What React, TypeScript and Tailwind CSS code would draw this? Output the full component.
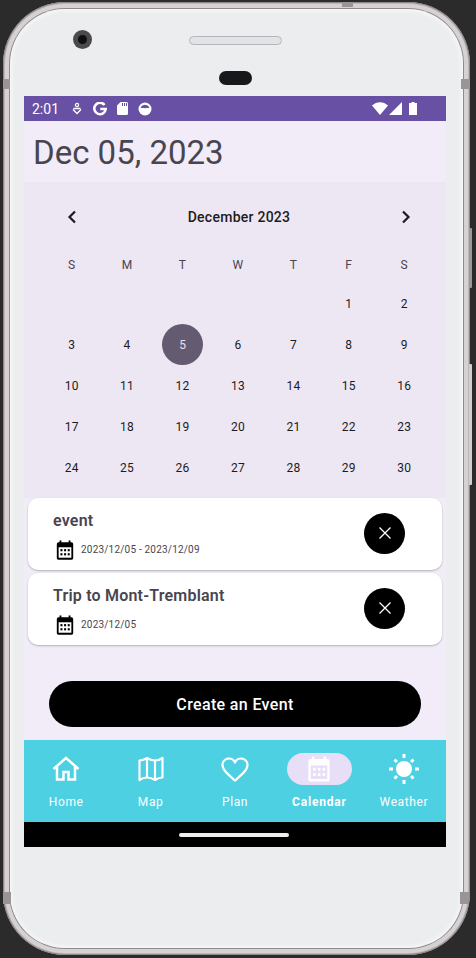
const F = "[font-family:Roboto,'Liberation_Sans',sans-serif]";

const weeks: (number | null)[][] = [
  [null, null, null, null, null, 1, 2],
  [3, 4, 5, 6, 7, 8, 9],
  [10, 11, 12, 13, 14, 15, 16],
  [17, 18, 19, 20, 21, 22, 23],
  [24, 25, 26, 27, 28, 29, 30],
];

function CalIcon({ size = 20, color = "#000", hole = "#fff" }: { size?: number; color?: string; hole?: string }) {
  return (
    <svg width={size} height={size} viewBox="0 0 20 22" fill="none">
      <rect x="4" y="0.5" width="2" height="4" fill={color} />
      <rect x="14" y="0.5" width="2" height="4" fill={color} />
      <path d="M3 2.5h14a2 2 0 0 1 2 2V20a1.6 1.6 0 0 1-1.6 1.6H2.6A1.6 1.6 0 0 1 1 20V4.500a2 2 0 0 1 2-2z" fill={color} />
      <rect x="3" y="8" width="14" height="11.500" fill={hole} />
      {[5, 9, 13].map((x) => (
        <g key={x}>
          <rect x={x} y="10" width="2.200" height="2.400" fill={color} />
          <rect x={x} y="14.500" width="2.200" height="2.400" fill={color} />
        </g>
      ))}
    </svg>
  );
}

function CloseBtn() {
  return (
    <div className="w-[41px] h-[41px] mt-[-2px] rounded-full bg-black flex items-center justify-center">
      <svg width="12" height="12" viewBox="0 0 12 12" stroke="#fff" strokeWidth="1.300">
        <path d="M0.500 0.500l11 11M11.500 0.500l-11 11" />
      </svg>
    </div>
  );
}

function EventCard({ title, date, top }: { title: string; date: string; top: string }) {
  return (
    <div className={`${top} h-[72px] mx-[4px] bg-white rounded-[10px] shadow-[0_1px_2px_rgba(0,0,0,0.25)] flex items-center pl-[25px] pr-[37px]`}>
      <div className="flex-1 flex flex-col">
        <div className="text-[16px] leading-[20px] font-semibold tracking-[0.2px] text-[#49454f] mt-[2px]">{title}</div>
        <div className="flex items-center gap-[6px] mt-[9px] ml-[2px]">
          <CalIcon size={20} />
          <span className="text-[10px] leading-[14px] tracking-[0.2px] text-[#49454f]">{date}</span>
        </div>
      </div>
      <CloseBtn />
    </div>
  );
}

function NavItem({ label, icon, active }: { label: string; icon: React.ReactNode; active?: boolean }) {
  return (
    <div className="flex-1 flex flex-col items-center">
      <div className={`w-[65px] h-[32px] rounded-full flex items-center justify-center ${active ? "bg-[#e8def8]" : ""}`}>{icon}</div>
      <div className={`mt-[9px] text-[12px] leading-[16px] text-white ${active ? "font-bold tracking-[0.8px]" : "font-normal tracking-[0.6px]"}`}>{label}</div>
    </div>
  );
}

export default function App() {
  return (
    <div className={`${F} w-[476px] h-[958px] bg-[#2b2b2b] overflow-hidden pt-[2px] pl-[3px] relative`}>
      {/* side buttons */}
      <div className="absolute left-[469px] top-[228px] w-[3px] h-[60px] bg-[#9a9a9a] rounded-r-[1px]" />
      <div className="absolute left-[469px] top-[364px] w-[3px] h-[121px] bg-[#cfcfcf] rounded-r-[1px]" />
      {/* phone body */}
      <div className="w-[467px] h-[953px] rounded-[62px] bg-[#bdb6b8] p-[2px] shadow-[inset_0_0_0_1px_#8f898b]">
        <div className="w-full h-full rounded-[60px] bg-[#d6d1d3] p-[4px]">
          <div className="w-full h-full rounded-[56px] p-[1px] bg-[#8e8a8c]">
            <div className="w-full h-full rounded-[55px] bg-[#ecedef] shadow-[inset_0_0_6px_#ffffff] flex flex-col pl-[14px]">
              {/* top bezel */}
              <div className="h-[87px] relative shrink-0">
                <div className="absolute left-[49px] top-[21px] w-[19px] h-[19px] rounded-full bg-[#4a4a4d] flex items-center justify-center">
                  <div className="w-[9px] h-[9px] rounded-full bg-[#0f0f0f]" />
                </div>
                <div className="absolute left-[165px] top-[27px] w-[93px] h-[9px] rounded-full bg-[#e2e3e6] border border-[#b5b6ba]" />
                <div className="absolute left-[195px] top-[62px] w-[33px] h-[14px] rounded-full bg-[#16181b]" />
              </div>
              {/* screen */}
              <div className="w-[422px] h-[751px] flex flex-col shrink-0 overflow-hidden bg-[#f1ecf7]">
                {/* status bar */}
                <div className="h-[25px] bg-[#6850a4] flex items-center pl-[8px] text-white shrink-0">
                  <span className="text-[14px] leading-[20px] w-[38px] font-normal">2:01</span>
                  <svg className="ml-[2px]" width="10" height="13" viewBox="0 0 10 13" fill="none" stroke="#fff" strokeWidth="1.300">
                    <circle cx="5" cy="3" r="1.600" />
                    <path d="M1.500 6.500h7M1 7.500L5 11.500l4-4" />
                  </svg>
                  <svg className="ml-[11px]" width="14" height="14" viewBox="0 0 14 14" fill="none" stroke="#fff" strokeWidth="2.600">
                    <path d="M11.500 3A5.700 5.700 0 1 0 12.700 7H7.300" />
                  </svg>
                  <svg className="ml-[10px]" width="11" height="13" viewBox="0 0 11 13" fill="#fff">
                    <path d="M3.500 0H9.500A1.500 1.500 0 0 1 11 1.500V11.500A1.500 1.500 0 0 1 9.500 13H1.500A1.500 1.500 0 0 1 0 11.500V3.500zM5 1v3h1V1zM7 1v3h1V1zM9 1v3h1V1z" fillRule="evenodd" />
                  </svg>
                  <svg className="ml-[10px]" width="14" height="14" viewBox="0 0 14 14">
                    <circle cx="7" cy="7" r="6.500" fill="#fff" />
                    <path d="M2.500 5.500A5 5 0 0 1 11.500 5.500C10 6.500 9 5.500 7 6.300 5 5.500 4 6.500 2.500 5.500z" fill="#6850a4" />
                  </svg>
                  <div className="ml-auto flex items-center pr-[29px]">
                    <svg width="16" height="13" viewBox="0 0 16 13" fill="#fff">
                      <path d="M0 3.500C4.500-1 11.500-1 16 3.500L8 13z" />
                    </svg>
                    <svg className="ml-[1px]" width="13" height="13" viewBox="0 0 13 13" fill="#fff">
                      <path d="M13 0V13H0z" />
                    </svg>
                    <svg className="ml-[7px]" width="8" height="13" viewBox="0 0 8 13" fill="#fff">
                      <path d="M2.500 0H5.500V1H8V13H0V1H2.500z" />
                    </svg>
                  </div>
                </div>
                {/* title */}
                <div className="h-[61px] bg-[#f2ecf9] flex items-center pl-[9px] shrink-0">
                  <span className="text-[33px] leading-[40px] text-[#49454f] mt-[2px] mr-[1px]">Dec 05, 2023</span>
                </div>
                {/* calendar */}
                <div className="h-[316px] bg-[#ede7f4] shrink-0">
                  <div className="h-[70px] flex items-center justify-between pl-[43px] pr-[35px]">
                    <svg width="10" height="14" viewBox="0 0 10 14" fill="none" stroke="#1d1b20" strokeWidth="2.200">
                      <path d="M8 1.500L2.500 7 8 12.500" />
                    </svg>
                    <span className="text-[14px] leading-[20px] font-medium text-[#1d1b20] tracking-[0.25px]">December 2023</span>
                    <svg width="10" height="14" viewBox="0 0 10 14" fill="none" stroke="#1d1b20" strokeWidth="2.200">
                      <path d="M2 1.500L7.500 7 2 12.500" />
                    </svg>
                  </div>
                  <div className="grid grid-cols-7 w-[388px] ml-[20px] h-[25px] items-center">
                    {["S", "M", "T", "W", "T", "F", "S"].map((d, i) => (
                      <div key={i} className="text-center text-[12px] leading-[16px] tracking-[0.4px] text-[#49454f]">{d}</div>
                    ))}
                  </div>
                  <div className="w-[388px] ml-[20px] mt-[6px] flex flex-col">
                    {weeks.map((w, i) => (
                      <div key={i} className="grid grid-cols-7 h-[41px]">
                        {w.map((d, j) => (
                          <div key={j} className="flex items-center justify-center">
                            {d === 5 ? (
                              <div className="w-[41px] h-[41px] rounded-full bg-[#655b70] flex items-center justify-center text-[12px] text-[#e8e0ee]">5</div>
                            ) : (
                              <span className="text-[12px] leading-[16px] tracking-[0.3px] text-[#1d1b20]">{d}</span>
                            )}
                          </div>
                        ))}
                      </div>
                    ))}
                  </div>
                </div>
                {/* events */}
                <div className="flex-1 flex flex-col">
                  <EventCard top="" title="event" date="2023/12/05 - 2023/12/09" />
                  <EventCard top="mt-[3px]" title="Trip to Mont-Tremblant" date="2023/12/05" />
                  <div className="mt-[36px] mx-[25px] h-[46px] rounded-full bg-black flex items-center justify-center pt-[2px] text-[16px] font-medium tracking-[0.35px] text-white">Create an Event</div>
                </div>
                {/* nav */}
                <div className="h-[82px] bg-[#4dd0e2] flex pt-[13px] shrink-0">
                  <NavItem label="Home" icon={
                    <svg width="28" height="26" viewBox="0 0 28 26" fill="none" stroke="#fff" strokeWidth="2.500">
                      <path d="M1.500 13L14 2l12.500 11M5 11v12.500h6.500V16h5v7.500H23V11" />
                    </svg>} />
                  <NavItem label="Map" icon={
                    <svg width="26" height="26" viewBox="0 0 26 26" fill="none" stroke="#fff" strokeWidth="2.200" strokeLinejoin="round">
                      <path d="M1.500 4.500Q5 4.500 9 2 13 4.500 17 4.500 21 4.500 24.500 2v19.500Q21 21.500 17 24 13 21.500 9 21.500 5 21.500 1.500 24zM9 2v19.500M17 4.500V24" />
                    </svg>} />
                  <NavItem label="Plan" icon={
                    <svg width="28" height="25" viewBox="0 0 28 25" fill="none" stroke="#fff" strokeWidth="2.200" strokeLinejoin="round">
                      <path d="M14 23.500C7 17.500 1.500 13 1.500 8A6.500 6.500 0 0 1 14 5.500 6.500 6.500 0 0 1 26.500 8c0 5-5.500 9.500-12.500 15.500z" />
                    </svg>} />
                  <NavItem active label="Calendar" icon={<CalIcon size={26} color="#fff" hole="#e8def8" />} />
                  <NavItem label="Weather" icon={
                    <svg width="30" height="30" viewBox="0 0 30 30" fill="#fff">
                      <circle cx="15" cy="15" r="8" />
                      <rect x="13.500" y="0" width="3" height="4" />
                      <rect x="13.500" y="26" width="3" height="4" />
                      <rect x="0" y="13.500" width="4" height="3" />
                      <rect x="26" y="13.500" width="4" height="3" />
                      <path d="M4.500 6.500l2-2 2.500 2.500-2 2zM25.500 6.500l-2-2-2.500 2.500 2 2zM4.500 23.500l2 2 2.500-2.500-2-2zM25.500 23.500l-2 2-2.500-2.500 2-2z" />
                    </svg>} />
                </div>
                {/* gesture bar */}
                <div className="h-[25px] bg-black flex items-center justify-center shrink-0">
                  <div className="w-[110px] h-[4px] rounded-full bg-[#ecedef] mr-[2px]" />
                </div>
              </div>
            </div>
          </div>
        </div>
      </div>
      {/* antenna notches on the metal frame */}
      <div className="absolute left-[342px] top-[2px] w-[11px] h-[5px] bg-[#9a9496]" />
      <div className="absolute left-[3px] top-[79px] w-[7px] h-[10px] bg-[#9a9496]" />
      <div className="absolute left-[461px] top-[79px] w-[9px] h-[10px] bg-[#9a9496]" />
      <div className="absolute left-[3px] top-[892px] w-[8px] h-[12px] bg-[#9a9496]" />
      <div className="absolute left-[460px] top-[892px] w-[9px] h-[12px] bg-[#9a9496]" />
    </div>
  );
}
